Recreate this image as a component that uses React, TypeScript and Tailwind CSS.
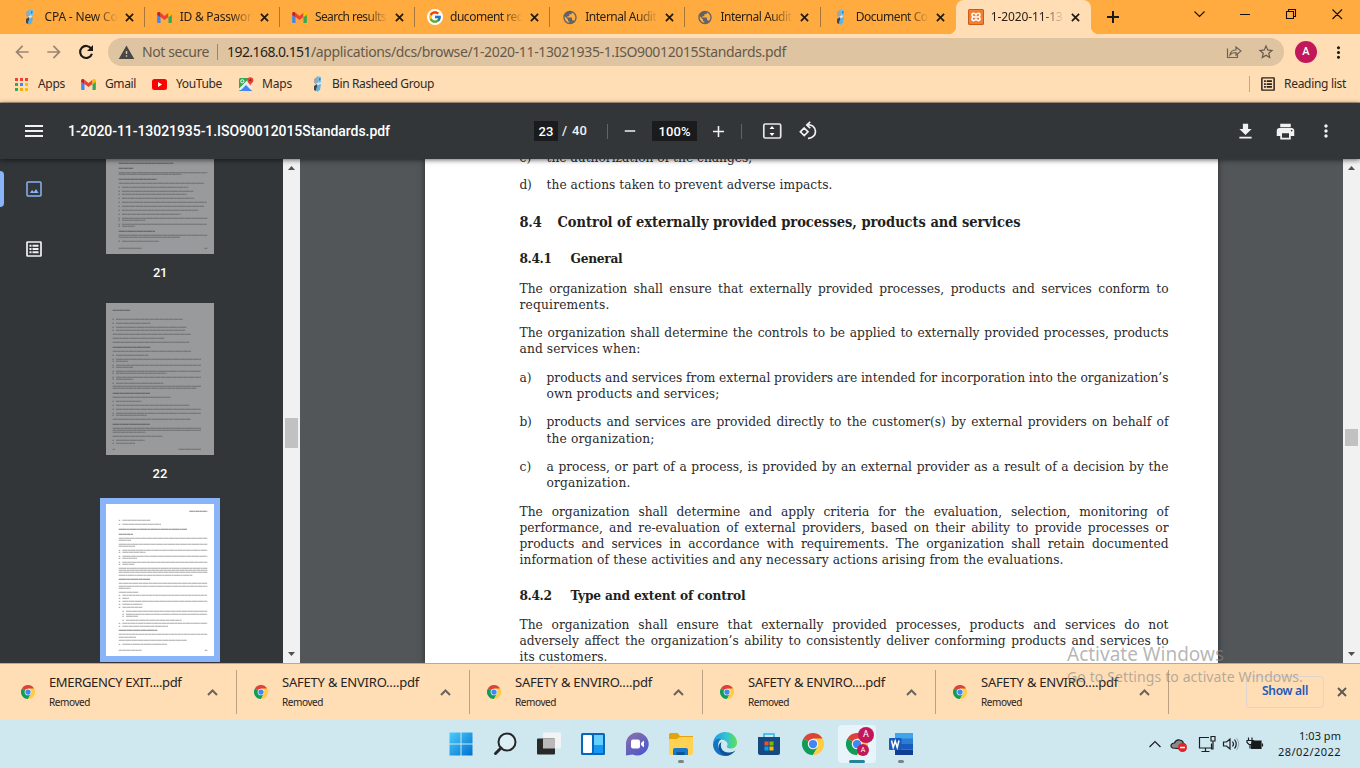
import { useLayoutEffect, useRef, type ReactNode } from "react";
import { FcGoogle } from "react-icons/fc";
import {
  MdArrowBack, MdArrowForward, MdWarning, MdStarBorder, MdMoreVert,
  MdPublic, MdMenu, MdGetApp, MdPrint, MdAdd, MdRemove,
} from "react-icons/md";

const UI = "font-['Noto_Sans','Open_Sans',sans-serif]";
const SERIF = "font-['DejaVu_Serif_Condensed','DejaVu_Serif','Liberation_Serif',serif]";

/* Text set to an exact measure by spreading the difference over letters or words. */
function Fit({ w, by = "letter", className = "", children }: { w: number; by?: "letter" | "word"; className?: string; children: string }) {
  const ref = useRef<HTMLSpanElement>(null);
  useLayoutEffect(() => {
    const el = ref.current;
    if (!el) return;
    el.style.letterSpacing = "";
    el.style.wordSpacing = "";
    const diff = w - el.getBoundingClientRect().width;
    const spaces = children.split(" ").length - 1;
    if (by === "word" && spaces > 0) el.style.wordSpacing = `${diff / spaces}px`;
    else {
      const base = parseFloat(getComputedStyle(el).letterSpacing) || 0;
      el.style.letterSpacing = `${base + diff / children.length}px`;
    }
  }, [w, by, children]);
  return <span ref={ref} className={`inline-block w-max shrink-0 whitespace-pre ${className}`}>{children}</span>;
}

function Cross({ className }: { className: string }) {
  return (
    <svg viewBox="0 0 10 10" className={className} fill="none" stroke="currentColor" strokeWidth="1.900">
      <path d="M1 1L9 9M9 1L1 9" />
    </svg>
  );
}

function Gmail() {
  return (
    <svg viewBox="0 0 24 18" className="h-[11px] w-[15px]">
      <path d="M0 3v13.4C0 17.300.7 18 1.600 18H5.500V8z" fill="#4285f4" />
      <path d="M18.500 18h3.900c.9 0 1.600-.7 1.600-1.600V3l-5.500 5z" fill="#34a853" />
      <path d="M5.500 8V1.400L12 6.500l6.500-5.100V8L12 13z" fill="#ea4335" />
      <path d="M0 2.500v2L5.500 8.500V1.400L4 .5C2.200-.8 0 .4 0 2.500z" fill="#c5221f" />
      <path d="M24 2.500v2L18.500 8.500V1.400L20 .5c1.800-1.300 4-.1 4 2z" fill="#fbbc04" />
    </svg>
  );
}

function Rasheed() {
  return (
    <svg viewBox="0 0 10 16" className="h-4 w-[10px]">
      <path d="M4 0L8 1L8 6L5 8L3 6L3 3z" fill="#6cc0ec" />
      <path d="M1 3L4 1L5 6L3 8L1 7z" fill="#9aa7ae" />
      <path d="M3 8L6 6L7 8L4 11z" fill="#d7ebf5" />
      <path d="M1 10L4 8L5 12L3 15L1 14z" fill="#45494d" />
      <path d="M5 9L8 8L7 14L4 16L3 13z" fill="#5cb4e4" />
      <path d="M6 2L8 3L6 5z" fill="#267eb8" />
    </svg>
  );
}

function GoogleTab() {
  return <span className="flex size-4 items-center justify-center rounded-full bg-white"><FcGoogle size={14} /></span>;
}

function Xampp() {
  return (
    <svg viewBox="0 0 16 16" className="size-4">
      <rect width="16" height="16" rx="1.500" fill="#d05a17" />
      <rect x="1" y="1" width="14" height="14" rx="1" fill="#f07f33" />
      <path d="M8 5.800C7 3.800 4 3.700 4 5.800c0 1.100.6 1.600 1.200 2.100-.8.5-1.300 1.100-1.300 2.100C3.900 12.300 7 12 8 10.200c1 1.800 4.100 2.100 4.100-.2 0-1-.5-1.600-1.300-2.100.6-.5 1.200-1 1.200-2.100C12 3.700 9 3.800 8 5.800zM6 8h4" fill="none" stroke="#fff" strokeWidth="1.600" />
    </svg>
  );
}

function Chrome({ className }: { className: string }) {
  return (
    <svg viewBox="0 0 48 48" className={className}>
      <path d="M24 24L3.200 12A24 24 0 0 1 44.800 12z" fill="#db4437" />
      <path d="M24 24L3.200 12A24 24 0 0 0 24 48L34.400 30z" fill="#0f9d58" />
      <path d="M24 24L34.400 30L24 48A24 24 0 0 0 44.800 12H24z" fill="#ffcd40" />
      <circle cx="24" cy="24" r="11.500" fill="#f1f1f1" />
      <circle cx="24" cy="24" r="9" fill="#4285f4" />
    </svg>
  );
}

function ListIcon({ className }: { className: string }) {
  return (
    <svg viewBox="0 0 16 16" className={className} fill="none" stroke="currentColor" strokeWidth="1.700">
      <rect x="1" y="1" width="14" height="14" rx=".5" />
      <path d="M3.500 4.800H5.500M6.500 4.800H12.500M3.500 8H5.500M6.500 8H12.500M3.500 11.200H5.500M6.500 11.200H12.500" strokeWidth="2" />
    </svg>
  );
}

const tabs: { title: string; icon: ReactNode; w: number }[] = [
  { title: "CPA - New Co", icon: <Rasheed />, w: 73 },
  { title: "ID & Passwor", icon: <Gmail />, w: 72 },
  { title: "Search results", icon: <Gmail />, w: 71 },
  { title: "ducoment rec", icon: <GoogleTab />, w: 72 },
  { title: "Internal Audit", icon: <MdPublic size={17} color="#5f6368" />, w: 71 },
  { title: "Internal Audit", icon: <MdPublic size={17} color="#5f6368" />, w: 71 },
  { title: "Document Co", icon: <Rasheed />, w: 72 },
  { title: "1-2020-11-13", icon: <Xampp />, w: 72 },
];

function TabStrip() {
  return (
    <div className="flex h-[34px] bg-[#ffab40] pl-[9.500px] text-[12px] text-[#2b2114]">
      {tabs.map((t, i) => {
        const active = i === 7;
        return (
          <div key={i} className={`relative flex w-[135.200px] shrink-0 items-center pl-[12px] ${active ? "rounded-t-lg bg-[#ffddb5]" : ""}`}>
            <span className="flex w-4 justify-center">{t.icon}</span>
            <span className="ml-[7px] w-[73px] overflow-hidden whitespace-nowrap [mask-image:linear-gradient(to_right,#000_70%,transparent)]">
              <Fit w={t.w}>{t.title}</Fit>
            </span>
            <Cross className="ml-[7px] size-[9px] text-[#1f1a12]" />
            {i < 6 && <i className="ml-auto h-5 w-px bg-[#a87638]" />}
            {active && (
              <>
                <i className="absolute bottom-0 -left-2 size-2 bg-[radial-gradient(circle_at_0_0,transparent_8px,#ffddb5_8.500px)]" />
                <i className="absolute -right-2 bottom-0 size-2 bg-[radial-gradient(circle_at_100%_0,transparent_8px,#ffddb5_8.500px)]" />
              </>
            )}
          </div>
        );
      })}
      <div className="flex w-[46px] items-center justify-center">
        <svg viewBox="0 0 12 12" className="mr-[2px] size-3" stroke="#1c1a18" strokeWidth="2"><path d="M6 0V12M0 6H12" /></svg>
      </div>
      <svg viewBox="0 0 170 34" className="ml-[41px] h-[34px] w-[170px]" fill="none" stroke="#111" strokeWidth="1.100">
        <path d="M16.500 11.500L21.500 16.500L26.500 11.500M62 14.500H72M108.500 11.500h7v7h-7zM110.500 11.500v-2h7v7h-2M154.500 9.500l9.500 9.500M164 9.500l-9.500 9.500" />
      </svg>
    </div>
  );
}

function AddressRow() {
  return (
    <div className="flex h-9 items-center bg-[#ffddb5] pl-3 text-[14px]">
      <MdArrowBack size={20} color="#998672" />
      <MdArrowForward size={20} color="#998672" className="ml-3" />
      <svg viewBox="0 0 16 16" className="ml-[14px] size-4" fill="none" stroke="#1d1b18" strokeWidth="2.200">
        <path d="M13.200 4.700A6 6 0 1 0 13.900 9.700" />
        <path d="M15 1v6H9z" fill="#1d1b18" stroke="none" />
      </svg>
      <div className="ml-[14px] flex h-7 w-[1176px] items-center rounded-full bg-[#dfc4a1] pl-[10px] text-[#66594a]">
        <MdWarning size={17} color="#474747" />
        <Fit w={67} className="ml-[7px] -mt-px">Not secure</Fit>
        <i className="ml-2 h-4 w-px bg-[#96836b]" />
        <Fit w={84} className="ml-[9px] -mt-px text-[#241f19]">192.168.0.151</Fit>
        <Fit w={475} className="-mt-px">/applications/dcs/browse/1-2020-11-13021935-1.ISO90012015Standards.pdf</Fit>
        <svg viewBox="0 0 16 16" className="ml-[440px] size-4" fill="none" stroke="#6b6256" strokeWidth="1.200">
          <path d="M1.500 4.500v9h10v-3M4 11c.5-3.500 3-5 6-5V3l5 4-5 4V8.500c-2.500 0-4.500.6-6 2.500z" />
        </svg>
        <MdStarBorder size={18} className="ml-[15px]" />
      </div>
      <span className="ml-[11px] flex size-[22px] items-center justify-center rounded-full bg-[#c2185b] font-[Roboto,sans-serif] text-[11px] font-medium text-white">A</span>
      <MdMoreVert size={19} color="#1d1b18" className="ml-3" />
    </div>
  );
}

const appColors = ["bg-[#ea4335]", "bg-[#ea4335]", "bg-[#ea4335]", "bg-[#34a853]", "bg-[#4285f4]", "bg-[#fbbc04]", "bg-[#34a853]", "bg-[#f0ad10]", "bg-[#fbbc04]"];

function Bookmarks() {
  return (
    <div className="flex h-[33px] items-center border-b border-[#b89f82] bg-[#ffddb5] pb-[4px] pl-[15px] text-[12px] text-[#33291f]">
      <span className="grid w-[13px] grid-cols-3 gap-[2px]">
        {appColors.map((c, i) => <i key={i} className={`size-[3px] ${c}`} />)}
      </span>
      <Fit w={27} className="ml-[10px]">Apps</Fit>
      <span className="ml-4"><Gmail /></span>
      <Fit w={31} className="ml-[9px]">Gmail</Fit>
      <svg viewBox="0 0 15 11" className="ml-4 h-[11px] w-[15px]"><rect width="15" height="11" rx="2.500" fill="#f00" /><path d="M6 3v5l4-2.500z" fill="#fff" /></svg>
      <Fit w={46} className="ml-[9px]">YouTube</Fit>
      <svg viewBox="0 0 15 14" className="ml-[17px] h-[14px] w-[15px]">
        <rect y="1" width="13" height="13" rx="1.500" fill="#34a853" />
        <path d="M0 13L12 1L13 2V13z" fill="#e8eaed" />
        <path d="M1 14L7 8L13 14z" fill="#4285f4" />
        <path d="M0 12.500L11 1.500" stroke="#fff" strokeWidth="1.200" />
        <circle cx="3.300" cy="4.300" r="1.600" fill="none" stroke="#fff" />
        <path d="M11.300 9C11 6.500 8.300 6 8.300 3.200a3 3 0 0 1 6 0C14.300 6 11.600 6.500 11.300 9z" fill="#ea4335" />
        <circle cx="11.300" cy="3.200" r="1" fill="#8c1c13" />
      </svg>
      <Fit w={30} className="ml-2">Maps</Fit>
      <span className="ml-[21px]"><Rasheed /></span>
      <Fit w={102} className="ml-[9px]">Bin Rasheed Group</Fit>
      <i className="ml-auto h-4 w-px bg-[#c4a884]" />
      <ListIcon className="ml-[11px] size-[14px] text-[#29231c]" />
      <Fit w={62} className="mr-[14px] ml-[9px]">Reading list</Fit>
    </div>
  );
}

function PdfToolbar() {
  return (
    <div className="relative z-10 flex h-14 items-center bg-[#323639] pl-[22px] font-[Roboto,sans-serif] text-[14px] font-medium text-[#f1f1f1] shadow-[0_1px_5px_rgba(0,0,0,.6)]">
      <MdMenu size={24} />
      <Fit w={322} className="ml-[22px] text-white">1-2020-11-13021935-1.ISO90012015Standards.pdf</Fit>
      <span className="ml-[144px] flex h-5 w-6 items-center justify-center bg-[#191b1c] pt-px text-[13px] text-white"><Fit w={15}>23</Fit></span>
      <span className="ml-[4px] text-[13px]">/</span>
      <Fit w={15} className="ml-[5px] text-[13px]">40</Fit>
      <i className="ml-5 h-[15px] w-px bg-[#5f6467]" />
      <MdRemove size={18} className="ml-[13px]" />
      <span className="ml-[13px] flex h-5 w-[45px] items-center justify-center bg-[#191b1c] pt-px text-[13px] text-white"><Fit w={32}>100%</Fit></span>
      <MdAdd size={19} className="ml-[12px]" />
      <i className="ml-[13px] h-[15px] w-px bg-[#5f6467]" />
      <svg viewBox="0 0 20 16" className="ml-5 h-4 w-5">
        <rect x="1.800" y="1" width="16.900" height="14" rx="1.500" fill="none" stroke="#e8e8e8" strokeWidth="1.700" />
        <path d="M10 3l2.500 3h-5zM10 13l2.500-3h-5z" fill="#fff" />
      </svg>
      <svg viewBox="0 0 20 20" className="ml-[16px] size-5" fill="none" stroke="#f1f1f1" strokeWidth="1.700">
        <path d="M6.200 7L10 10.800L6.200 14.600L2.400 10.800zM9 4C14 3 17.500 6.500 17.500 10.500c0 4-3.500 7-7.500 6.800" />
        <path d="M12.200.8L8.800 4L12.200 7.200" />
      </svg>
      <MdGetApp size={21} className="mr-[19px] ml-auto" />
      <MdPrint size={21} className="mr-[20px]" />
      <MdMoreVert size={20} className="mr-[24px]" />
    </div>
  );
}

function Scrollbar({ thumb }: { thumb: string }) {
  return (
    <div className="flex w-[17px] shrink-0 flex-col items-center bg-[#f1f1f1] pt-[7px] pb-[7px]">
      <svg viewBox="0 0 7 4" className="h-1 w-[7px]"><path d="M0 4L3.500 0L7 4z" fill="#505050" /></svg>
      <i className={`w-[13px] bg-[#c1c1c1] ${thumb}`} />
      <svg viewBox="0 0 7 4" className="mt-auto h-1 w-[7px]"><path d="M0 0L3.500 4L7 0z" fill="#505050" /></svg>
    </div>
  );
}

/* Miniature text rows: y, start x, end x, heading flag. */
type Row = [number, number, number, number?];
const page21: Row[] = [
  [178, 356, 520, 1], [193, 356, 400, 1], [206, 356, 622], [211, 356, 545], [226, 356, 470, 1], [238, 356, 612],
  [250, 366, 565], [262, 366, 580], [271, 366, 560], [283, 366, 583], [295, 366, 620], [307, 366, 612], [319, 366, 595],
  [331, 366, 542], [343, 366, 622], [349, 366, 436], [361, 366, 620], [367, 366, 405], [382, 356, 465, 1], [394, 356, 622],
  [400, 356, 540], [412, 366, 477], [433, 356, 425], [433, 613, 622],
];
const page22: Row[] = [
  [61, 98, 151, 1], [88, 108, 308], [100, 108, 211], [112, 108, 319], [121, 108, 315], [133, 98, 332], [145, 98, 253], [157, 98, 328],
  [172, 98, 211, 1], [184, 98, 333], [196, 108, 206], [208, 108, 363], [214, 108, 144], [226, 108, 363], [232, 108, 159], [244, 108, 363],
  [250, 108, 260], [262, 108, 363], [268, 108, 160], [280, 108, 250], [289, 98, 363], [295, 98, 350], [310, 98, 210, 1], [322, 98, 272],
  [334, 108, 184], [346, 108, 328], [358, 108, 362], [370, 108, 363], [376, 108, 200], [388, 98, 332], [403, 98, 210, 1], [415, 98, 363],
  [421, 98, 363], [427, 98, 197], [439, 98, 247], [451, 108, 194], [460, 108, 165], [478, 98, 105], [478, 295, 363],
];
const page23: Row[] = [
  [94, 328, 382, 1], [121, 127, 211], [133, 127, 243], [148, 116, 321, 1], [163, 116, 159, 1], [175, 116, 382], [181, 116, 153], [193, 116, 382],
  [199, 116, 165], [211, 127, 382], [217, 127, 197], [229, 127, 382], [235, 127, 171], [247, 127, 382], [253, 127, 163], [265, 116, 382],
  [271, 116, 382], [277, 116, 382], [286, 116, 338], [298, 116, 210, 1], [310, 116, 382], [319, 116, 382], [325, 116, 152], [337, 116, 175],
  [346, 127, 382], [355, 127, 147], [364, 127, 382], [373, 127, 187], [382, 127, 187], [394, 138, 382], [403, 138, 382], [409, 138, 174],
  [421, 138, 305], [430, 127, 382], [439, 127, 264], [451, 116, 232, 1], [463, 116, 382], [472, 116, 168], [481, 116, 320], [493, 127, 261],
  [511, 116, 185], [511, 374, 382],
];

function Mini({ rows, box, left, className }: { rows: Row[]; box: string; left: number; className: string }) {
  return (
    <svg viewBox={box} className={className} stroke="#333">
      {rows.map(([y, a, b, h], i) => (
        <g key={i} strokeWidth={3.2} opacity={h ? 0.6 : 0.42}>
          <line x1={a} x2={b} y1={y} y2={y} strokeDasharray={`${11 + (i % 4) * 4} 0.8 ${7 + (i % 3) * 5} 0.8`} />
          {!h && a > left && a < left + 30 && <line x1={a - 11} x2={a - 6} y1={y} y2={y} />}
        </g>
      ))}
    </svg>
  );
}

function Sidebar() {
  return (
    <div className="flex w-[300px] shrink-0 bg-[#323639]">
      <div className="flex w-[72px] flex-col">
        <div className="mt-3 flex h-9 items-center">
          <i className="h-9 w-1 rounded-r bg-[#8ab4f8]" />
          <svg viewBox="0 0 16 16" className="ml-[22px] size-4" fill="none" stroke="#8ab4f8" strokeWidth="1.500">
            <rect x="1" y="1" width="14" height="14" rx="1" /><path d="M4 12l2-3 2 2 2-3 2.500 4z" fill="#8ab4f8" stroke="none" />
          </svg>
        </div>
        <ListIcon className="mt-[34px] ml-[26px] size-4 text-[#f1f1f1]" />
      </div>
      <div className="flex w-[176px] flex-col items-center font-[Roboto,sans-serif] text-[13px] leading-[16px] font-medium text-white">
        <Mini rows={page21} left={356} box="318 165 324 285" className="h-[95px] w-[108px] bg-[#999a9b]" />
        <Fit w={14} className="mt-[11px]">21</Fit>
        <Mini rows={page22} left={98} box="78 39 324 456" className="mt-[22px] h-[152px] w-[108px] bg-[#999a9b]" />
        <Fit w={15} className="mt-[11px]">22</Fit>
        <div className="mt-4 bg-[#8ab4f8] p-[6px]">
          <Mini rows={page23} left={116} box="78 72 324 456" className="h-[152px] w-[108px] bg-white" />
        </div>
      </div>
      <div className="w-[35px]" />
      <Scrollbar thumb="mt-[248px] h-[30px]" />
    </div>
  );
}

/* mt: spacing class, m: list marker or clause number, w: line width */
type Line = { mt: string; m?: string; t: string; w: number; h?: "lg" | "sm"; indent?: boolean; just?: boolean };
const lines: Line[] = [
  { mt: "-mt-[10px]", m: "c)", t: "the authorization of the changes;", w: 206, indent: true },
  { mt: "mt-[11px]", m: "d)", t: "the actions taken to prevent adverse impacts.", w: 286, indent: true },
  { mt: "mt-[22px]", m: "8.4", t: "Control of externally provided processes, products and services", w: 463, h: "lg" },
  { mt: "mt-5", m: "8.4.1", t: "General", w: 52, h: "sm" },
  { mt: "mt-[14px]", t: "The organization shall ensure that externally provided processes, products and services conform to", w: 649, just: true },
  { mt: "", t: "requirements.", w: 90 },
  { mt: "mt-3", t: "The organization shall determine the controls to be applied to externally provided processes, products", w: 649, just: true },
  { mt: "", t: "and services when:", w: 121 },
  { mt: "mt-[13px]", m: "a)", t: "products and services from external providers are intended for incorporation into the organization’s", w: 622, indent: true, just: true },
  { mt: "", t: "own products and services;", w: 173, indent: true },
  { mt: "mt-3", m: "b)", t: "products and services are provided directly to the customer(s) by external providers on behalf of", w: 622, indent: true, just: true },
  { mt: "mt-px", t: "the organization;", w: 108, indent: true },
  { mt: "mt-3", m: "c)", t: "a process, or part of a process, is provided by an external provider as a result of a decision by the", w: 622, indent: true, just: true },
  { mt: "", t: "organization.", w: 84, indent: true },
  { mt: "mt-[13px]", t: "The organization shall determine and apply criteria for the evaluation, selection, monitoring of", w: 649, just: true },
  { mt: "", t: "performance, and re-evaluation of external providers, based on their ability to provide processes or", w: 649, just: true },
  { mt: "", t: "products and services in accordance with requirements. The organization shall retain documented", w: 649, just: true },
  { mt: "", t: "information of these activities and any necessary actions arising from the evaluations.", w: 544 },
  { mt: "mt-5", m: "8.4.2", t: "Type and extent of control", w: 175, h: "sm" },
  { mt: "mt-[13px]", t: "The organization shall ensure that externally provided processes, products and services do not", w: 649, just: true },
  { mt: "", t: "adversely affect the organization’s ability to consistently deliver conforming products and services to", w: 649, just: true },
  { mt: "", t: "its customers.", w: 88 },
];

function Viewer() {
  return (
    <div className="flex min-w-0 flex-1 bg-[#525659]">
      <div className={`ml-[125px] w-[793px] overflow-hidden bg-white pl-[94.500px] text-[13.600px] leading-4 text-[#2b2a2b] shadow-[0_0_6px_rgba(0,0,0,.5)] ${SERIF}`}>
        {lines.map((l, i) => (
          <div key={i} className={`flex h-4 ${l.mt} ${l.h ? "font-bold text-[#231f20]" : ""} ${l.h === "lg" ? "text-[14.500px]" : ""}`}>
            {l.m && (
              <span className={l.h === "lg" ? "w-[38px]" : l.h ? "w-[51px]" : "w-[27px]"}>
                <Fit w={l.h === "lg" ? 22 : l.h ? 32 : 12}>{l.m}</Fit>
              </span>
            )}
            {!l.m && l.indent && <span className="w-[27px]" />}
            <Fit w={l.w} by={l.just ? "word" : "letter"}>{l.t}</Fit>
          </div>
        ))}
      </div>
      <div className="flex-1" />
      <Scrollbar thumb="mt-[259px] h-[17px]" />
    </div>
  );
}

const downloads = ["EMERGENCY EXIT....pdf", "SAFETY & ENVIRO....pdf", "SAFETY & ENVIRO....pdf", "SAFETY & ENVIRO....pdf", "SAFETY & ENVIRO....pdf"];

function Downloads() {
  return (
    <div className="flex h-[57px] items-center border-t border-[#c2a78a] bg-[#ffddb5] text-[#29231d]">
      {downloads.map((d, i) => (
        <div key={i} className="flex h-11 w-[233px] shrink-0 items-center pl-[21px]">
          <Chrome className="size-[14px]" />
          <div className="ml-[14px] flex h-11 w-[150px] flex-col items-start">
            <Fit w={i ? 137 : 132.5} className="mt-[3px] text-[13px] leading-[18px]">{d}</Fit>
            <Fit w={41} className="mt-[3px] text-[10px] leading-[16px]">Removed</Fit>
          </div>
          <svg viewBox="0 0 11 7" className="ml-[8px] h-[7px] w-[11px]" fill="none" stroke="#6a645d" strokeWidth="2"><path d="M1 6L5.500 1.500L10 6" /></svg>
          <i className="ml-auto h-11 w-px translate-x-[4px] bg-[#bba084]" />
        </div>
      ))}
      <span className="ml-[81px] flex h-8 w-[78px] items-center justify-center rounded border border-[#dcd5d0] pb-[2px] text-[12px] font-semibold text-[#2457bd]"><Fit w={46}>Show all</Fit></span>
      <Cross className="ml-[13px] size-[10px] text-[#5c5853]" />
    </div>
  );
}

const taskIcons: { icon: ReactNode; mark?: string }[] = [
  { icon: <svg viewBox="0 0 24 24" className="size-6"><defs><linearGradient id="win" x2="1" y2="1"><stop stopColor="#4ccdfb" /><stop offset="1" stopColor="#0070d0" /></linearGradient></defs><path d="M.5.5h11v11H.5zM12.500.5h11v11h-11zM.5 12.500h11v11H.5zM12.500 12.500h11v11h-11z" fill="url(#win)" /></svg> },
  { icon: <svg viewBox="0 0 24 24" className="size-6" fill="none" stroke="#25282a"><circle cx="14" cy="10" r="8.500" fill="#dceff4" strokeWidth="2" /><path d="M8 16L2.500 21.500" strokeWidth="3" strokeLinecap="round" /></svg> },
  { icon: <svg viewBox="0 0 24 24" className="size-6"><rect x="6" y=".5" width="18" height="16" rx="1" fill="#f3f3f3" /><rect y="6.500" width="18" height="16" rx="1" fill="#292929" /><path d="M6 6.500h12v10H6z" fill="#b9b9b9" /></svg> },
  { icon: <svg viewBox="0 0 24 24" className="size-6"><rect y="1" width="24" height="22" rx="1.500" fill="#0866bd" /><rect x="2" y="3" width="9" height="18" rx="1" fill="#fff" /><rect x="13" y="3" width="9" height="10" fill="#66d1ff" /><rect x="13" y="13" width="9" height="8" fill="#1598f4" /></svg> },
  { icon: <svg viewBox="0 0 24 24" className="size-6"><defs><linearGradient id="chat" x2=".6" y2="1"><stop stopColor="#8c72a8" /><stop offset="1" stopColor="#5059c9" /></linearGradient></defs><path d="M12.500.5a11.500 11.500 0 1 1-5 22L1 23.500V12A11.500 11.500 0 0 1 12.500.5z" fill="url(#chat)" /><rect x="6" y="7.500" width="9" height="9" rx="2" fill="#fff" /><path d="M16 11l3-2.500v7L16 13z" fill="#fff" /></svg> },
  { icon: <svg viewBox="0 0 24 24" className="size-6"><path d="M0 2.500Q0 1 1.500 1h7l2.500 3H24v4H0z" fill="#e5a50a" /><path d="M0 7h8l3-2h13v16q0 2-2 2H2q-2 0-2-2z" fill="#ffd253" /><path d="M4 23v-5q0-2 2-2h11q2 0 2 2v5z" fill="#1877c9" /><path d="M7.500 23v-3h8v3z" fill="#075697" /></svg>, mark: "w-[6px] bg-[#7b8589]" },
  { icon: <svg viewBox="0 0 24 24" className="size-6"><defs><linearGradient id="edge" x2="1"><stop stopColor="#2299e0" /><stop offset=".55" stopColor="#32c3d6" /><stop offset="1" stopColor="#63e048" /></linearGradient></defs><path d="M0 11.500C.5 5 5.500 0 12 0c7 0 12 5 12 10.500 0 4-3 6-6.500 6-2.500 0-4.300-1-3.500-2.200.8-1.300.9-3-.5-4.600C10 6 3 7 0 11.500z" fill="url(#edge)" /><path d="M0 12C1 8 5 6.200 8.500 7 5 9 4.500 13 6 17c1 3 3.500 5.500 6 6.900C5 24 0 19 0 12z" fill="#1272c3" /><path d="M8.500 10c-2 5 .5 11 8 10.500 2 0 4-.7 6-2C20 22 16.500 24 12 24 5 21 3.500 13 8.500 10z" fill="#0c5399" /></svg> },
  { icon: <svg viewBox="0 0 24 24" className="size-6"><path d="M7 5V2h10v3" fill="none" stroke="#28b4ee" strokeWidth="1.500" /><path d="M1 5h22v16q0 2-2 2H3q-2 0-2-2z" fill="#174a83" /><path d="M7.500 9.500h4v4h-4z" fill="#f25022" /><path d="M12.500 9.500h4v4h-4z" fill="#7fba00" /><path d="M7.500 14.500h4v4h-4z" fill="#00a4ef" /><path d="M12.500 14.500h4v4h-4z" fill="#ffb900" /></svg> },
  { icon: <Chrome className="size-[22px]" /> },
  {
    icon: (
      <span className="relative flex size-[38px] items-center justify-center rounded bg-[#e7f4f9] font-[Roboto,sans-serif] text-white">
        <Chrome className="size-[22px]" />
        <b className="absolute top-[2px] right-[2px] flex size-4 items-center justify-center rounded-full bg-[#c2185b] text-[9px] font-normal">A</b>
        <b className="absolute right-[7px] bottom-[7px] flex size-3 items-center justify-center rounded-full bg-[#c2185b] text-[7px] font-normal">A</b>
      </span>
    ),
    mark: "w-4 bg-[#26839a]",
  },
  { icon: <svg viewBox="0 0 24 24" className="size-6"><path d="M6 1h18v6H6z" fill="#41a5ee" /><path d="M6 6.500h18V12H6z" fill="#2b7cd3" /><path d="M6 12h18v5.500H6z" fill="#185abd" /><path d="M6 17.500h18V23H6z" fill="#103f91" /><rect y="6" width="12.500" height="12" rx="1" fill="#185abd" /><path d="M2.500 8.500L4.200 15.500L6.200 9L8.200 15.500L10 8.500" fill="none" stroke="#fff" strokeWidth="1.500" /></svg>, mark: "w-[6px] bg-[#7b8589]" },
];

function Taskbar() {
  return (
    <div className="flex h-12 items-center bg-[#cfe8ef] pl-[438.500px] text-[#16191b]">
      {taskIcons.map((t, i) => (
        <div key={i} className="relative flex h-12 w-[44.050px] shrink-0 items-center justify-center">
          {t.icon}
          {t.mark && <i className={`absolute bottom-[5px] h-[3px] rounded-full ${t.mark}`} />}
        </div>
      ))}
      <svg viewBox="0 0 120 20" className="ml-auto h-5 w-[120px]" fill="none" stroke="#1b1f21" strokeWidth="1.200">
        <path d="M4.500 13L10 7.500L15.500 13" />
        <path d="M27.500 14q-2-1-1.500-3 1-2 3.500-2 1.500-4 5.500-3 3 .5 3.500 3.500 2.500.5 2 3l-2 2.500z" fill="#8a8a8a" />
        <circle cx="37.500" cy="13.500" r="4.500" fill="#e0242d" stroke="none" /><path d="M35 13.500h5" stroke="#fff" strokeWidth="1.500" />
        <path d="M64 3.500H54.500v10.500H66.500V9.500M60.500 14v3M56.500 17.500h8M66 2.500h4v4.500h-4zM68 7v8h-2" />
        <path d="M78.500 8h3l3.500-3v10l-3.500-3h-3zM87.500 7.500q2 2.500 0 5M89.500 5.500q3.500 4.500 0 9" /><path d="M91.500 4q4.500 6 0 12" stroke="#9eb3ba" />
        <path d="M107 7h9v7.500h-9.500v-3.500z" fill="#16191b" /><path d="M103.500 3.500v3M107 3.500v3M102 6.500h6.500v2l-2 2h-2.500l-2-2zM105 10.500v4M117.500 9.500v3" strokeWidth="1.200" />
      </svg>
      <div className="mr-[19px] ml-[13px] flex flex-col items-end text-[11px] leading-4">
        <Fit w={42}>1:03 pm</Fit>
        <Fit w={63}>28/02/2022</Fit>
      </div>
    </div>
  );
}

export default function App() {
  return (
    <div className={`relative flex h-[768px] w-[1360px] flex-col overflow-hidden ${UI}`}>
      <TabStrip />
      <AddressRow />
      <Bookmarks />
      <PdfToolbar />
      <div className="flex h-[504px] overflow-hidden">
        <Sidebar />
        <Viewer />
      </div>
      <Downloads />
      <Taskbar />
      <div className="pointer-events-none absolute top-[641px] left-[1067px] z-20 flex flex-col items-start text-[#858585]/60">
        <Fit w={157} className="text-[19px] leading-[26px]">Activate Windows</Fit>
        <Fit w={236} className="text-[14px] leading-5">Go to Settings to activate Windows.</Fit>
      </div>
    </div>
  );
}
